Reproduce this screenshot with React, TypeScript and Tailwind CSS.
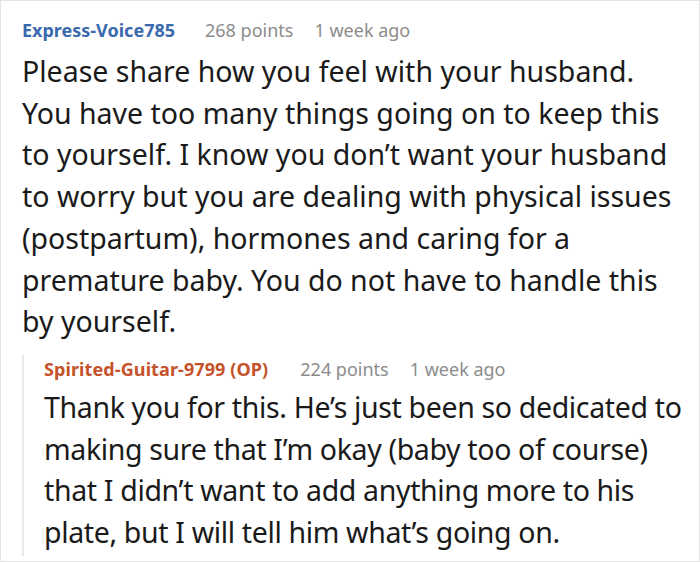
import React from "react";

export default function App() {
  return (
    <div className="w-[700px] h-[562px] bg-white border border-[#e4e4e4] overflow-hidden" style={{ fontFamily: '"Noto Sans", "Open Sans", sans-serif' }}>
      <div className="pl-[21px] pt-[15px] pr-[20px]">
        <div className="flex items-baseline text-[18px] leading-[28px]">
          <span className="font-bold text-[#3a69ad]">Express-Voice785</span>
          <span className="ml-[30px] text-[#8c8c8c]">268 points</span>
          <span className="ml-[21px] text-[#8c8c8c]">1 week ago</span>
        </div>
        <p className="mt-[7px] text-[28.5px] leading-[41.7px] text-[#1a1a1a]">
          Please share how you feel with your husband. You have too many things going on to keep this to yourself. I know you don’t want your husband to worry but you are dealing with physical issues (postpartum), hormones and caring for a premature baby. You do not have to handle this by yourself.
        </p>
        <div className="mt-[12px] border-l-2 border-[#e8e8e8] pl-[20px] pb-[2px] -mr-[20px]">
          <div className="flex items-baseline text-[18px] leading-[28px]">
            <span className="font-bold text-[#c4532b] tracking-[0.1px]">Spirited-Guitar-9799 (OP)</span>
            <span className="ml-[32px] text-[#8c8c8c]">224 points</span>
            <span className="ml-[21px] text-[#8c8c8c]">1 week ago</span>
          </div>
          <p className="mt-[4px] text-[28.5px] leading-[41.7px] text-[#1a1a1a] tracking-[-0.35px]">
            Thank you for this. He’s just been so dedicated to making sure that I’m okay (baby too of course) that I didn’t want to add anything more to his plate, but I will tell him what’s going on.
          </p>
        </div>
      </div>
    </div>
  );
}
